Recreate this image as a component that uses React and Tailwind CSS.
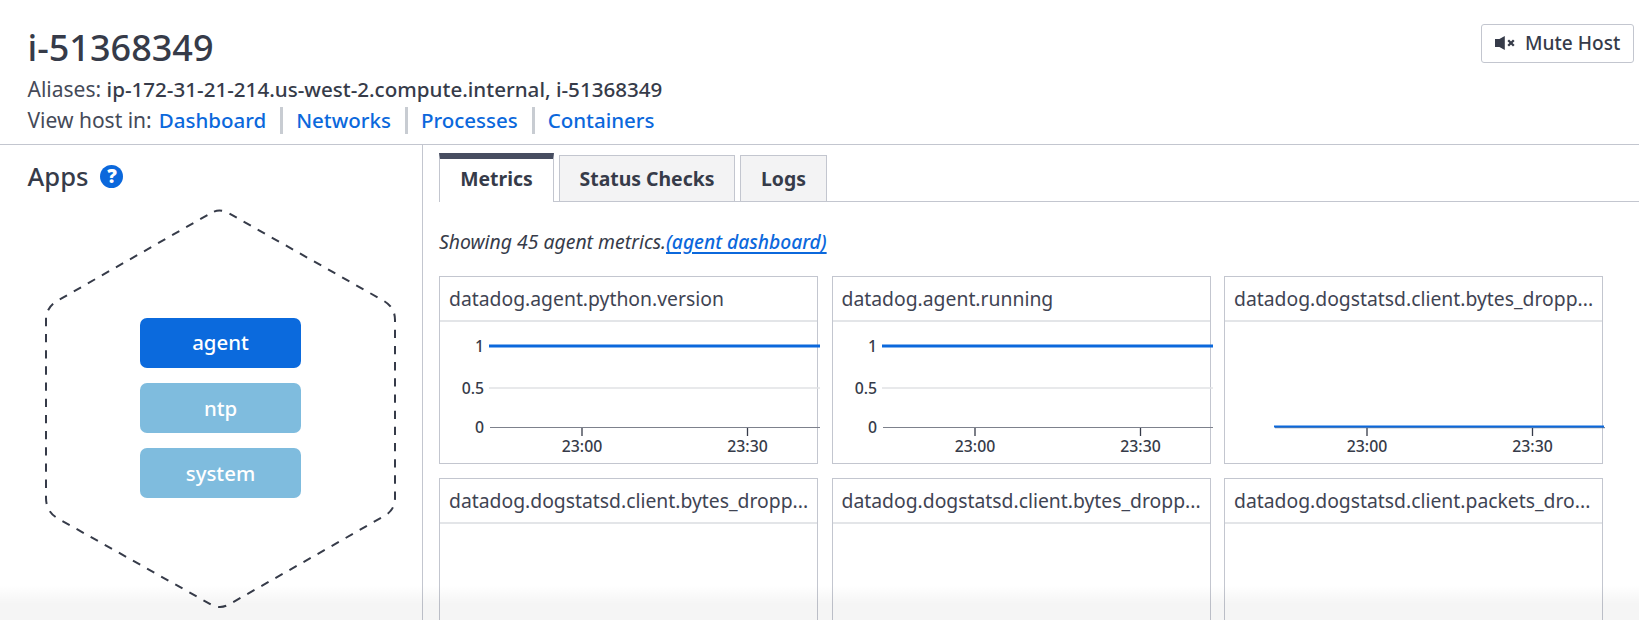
const LINKS = ["Dashboard", "Networks", "Processes", "Containers"];

const APPS = [
  { name: "agent", active: true },
  { name: "ntp" },
  { name: "system" },
];

const CARDS = [
  { title: "datadog.agent.python.version", chart: "one" },
  { title: "datadog.agent.running", chart: "one" },
  { title: "datadog.dogstatsd.client.bytes_dropp...", chart: "zero" },
  { title: "datadog.dogstatsd.client.bytes_dropp..." },
  { title: "datadog.dogstatsd.client.bytes_dropp..." },
  { title: "datadog.dogstatsd.client.packets_dro..." },
];

function MuteIcon() {
  return (
    <svg width="20" height="16" viewBox="0 0 20 16" className="shrink-0">
      <path d="M0 4h4.4L9.8 1v14L4.4 12H0z" fill="#363b49" />
      <path d="M13.2 5.2l5.6 5.6M18.8 5.2l-5.6 5.6" stroke="#363b49" strokeWidth="2.3" />
    </svg>
  );
}

function HelpIcon() {
  return (
    <span className="flex h-[23px] w-[23px] items-center justify-center rounded-full bg-[#0b68dc] text-[19px] leading-none font-black text-white">
      ?
    </span>
  );
}

function Header() {
  return (
    <header className="flex h-[145px] shrink-0 items-start justify-between border-b border-[#c3c6cf] pt-6 pr-[5px] pl-[27.5px]">
      <div className="pt-1">
        <h1 className="text-[36px] leading-10 font-medium">i-51368349</h1>
        <p className="mt-[6px] text-[21px] leading-[30px] whitespace-nowrap text-[#454a58]">
          Aliases: <span className="text-[20.6px] font-medium text-[#363b49]">ip-172-31-21-214.us-west-2.compute.internal, i-51368349</span>
        </p>
        <div className="mt-px flex items-center text-[20.5px] leading-[30px]">
          <span className="mr-[7px] text-[21px] text-[#454a58]">View host in:</span>
          {LINKS.map((l, i) => (
            <span key={l} className="flex items-center font-medium text-[#0b68dc]">
              {i > 0 && <span className="mr-[13px] ml-[14px] h-[27px] w-[3px] bg-[#c8ccd2]" />}
              {l}
            </span>
          ))}
        </div>
      </div>
      <button className="flex h-[39px] w-[153px] items-center gap-[10px] rounded-[3px] border border-[#c3c6cf] pb-px pl-[13px] text-[19.1px] font-medium whitespace-nowrap">
        <MuteIcon />
        Mute Host
      </button>
    </header>
  );
}

function Hexagon() {
  return (
    <svg width="422" height="417" viewBox="0 203 422 417" fill="none" className="col-start-1 row-start-1">
      <path
        d="M214 211.6Q220 209.2 227 212.2L384 301Q395 307.5 395 320V498Q395 509 386 515L229 604.5Q220 609.5 211 604.5L57 518Q46 511 46 498V320Q46 307.5 57 301L211 213Z"
        stroke="#363b49"
        strokeWidth="2"
        strokeDasharray="8.3 7.875"
      />
    </svg>
  );
}

function Sidebar() {
  return (
    <aside className="flex w-[423px] shrink-0 flex-col border-r border-[#c3c6cf]">
      <div className="flex h-[58px] items-center gap-3 pt-[4px] pl-[27.5px]">
        <h2 className="pt-[2px] text-[25.6px] leading-[34px] font-medium">Apps</h2>
        <HelpIcon />
      </div>
      <div className="grid">
        <Hexagon />
        <div className="col-start-1 row-start-1 flex flex-col gap-[15px] pt-[115px] pl-[140px]">
          {APPS.map((a) => (
            <div
              key={a.name}
              className={
                "flex h-[50px] w-[161px] items-center justify-center rounded-[7px] text-[20.4px] font-medium text-white " +
                (a.active ? "bg-[#0b6add] pb-[2px]" : "bg-[#7fbcde]")
              }
            >
              {a.name}
            </div>
          ))}
        </div>
      </div>
    </aside>
  );
}

function Tabs() {
  return (
    <div className="flex h-[57px] items-end pl-4 text-[19.4px] font-bold">
      <div className="flex h-[49px] w-[115px] items-center justify-center border-x border-t-[6px] border-x-[#c3c6cf] border-t-[#474d60] pb-[4px]">
        Metrics
      </div>
      <div className="w-[5px] self-stretch border-b border-[#c3c6cf]" />
      <div className="flex h-[47px] w-[176px] items-center justify-center border border-[#c3c6cf] bg-[#f3f3f4]">
        Status Checks
      </div>
      <div className="w-[5px] self-stretch border-b border-[#c3c6cf]" />
      <div className="flex h-[47px] w-[87px] items-center justify-center border border-[#c3c6cf] bg-[#f3f3f4]">
        Logs
      </div>
      <div className="flex-1 self-stretch border-b border-[#c3c6cf]" />
    </div>
  );
}

function Chart({ kind }) {
  const one = kind === "one";
  return (
    <svg width="381" height="141" viewBox="0 0 381 141" className="overflow-visible" fontSize="15.8" fontWeight="500" fill="#363b49">
      <path d="M142 106v8M307.5 106v8" stroke="#363b49" strokeWidth="1.3" />
      {one && (
        <>
          <path d="M49 66h331" stroke="#e1e2e5" strokeWidth="1.6" />
          <path d="M50 105.5h330" stroke="#7d818c" strokeWidth="1" />
          <path d="M49 24h331" stroke="#0b68dc" strokeWidth="3.2" />
          <g textAnchor="end">
            <text x="44" y="30">1</text>
            <text x="44" y="72">0.5</text>
            <text x="44" y="111">0</text>
          </g>
        </>
      )}
      {!one && (
        <>
          <path d="M50 105.7h330" stroke="#566a8c" strokeWidth="1" />
          <path d="M49 104.5h330" stroke="#0b68dc" strokeWidth="1.8" />
        </>
      )}
      <g textAnchor="middle">
        <text x="142" y="130">23:00</text>
        <text x="307.5" y="130">23:30</text>
      </g>
    </svg>
  );
}

function Card({ title, chart }) {
  return (
    <section className="h-[188px] w-[379px] border border-[#c3c6cf]">
      <h3 className="h-[45px] border-b-2 border-[#e3e5e8] pl-[9px] text-[19.35px] leading-[43px] whitespace-nowrap text-[#3f4453]">{title}</h3>
      {chart && <Chart kind={chart} />}
    </section>
  );
}

export default function App() {
  return (
    <div className="relative flex h-[620px] w-full flex-col overflow-hidden bg-white font-['Noto_Sans',sans-serif] text-[#363b49]">
      <Header />
      <div className="flex min-h-0 flex-1">
        <Sidebar />
        <main className="min-w-0 flex-1">
          <Tabs />
          <p className="mt-[26px] ml-4 text-[19.4px] leading-7 italic">
            Showing 45 agent metrics.
            <a className="text-[19.2px] font-medium text-[#0b68dc] underline decoration-[1.5px] underline-offset-[3px]">(agent dashboard)</a>
          </p>
          <div className="mt-5 ml-4 grid grid-cols-[repeat(3,379px)] gap-x-[13.5px] gap-y-[13.5px]">
            {CARDS.map((c, i) => (
              <Card key={i} {...c} />
            ))}
          </div>
        </main>
      </div>
      <div className="pointer-events-none absolute inset-x-0 bottom-0 h-[35px] bg-linear-to-b from-black/0 to-black/4 to-55%" />
    </div>
  );
}
